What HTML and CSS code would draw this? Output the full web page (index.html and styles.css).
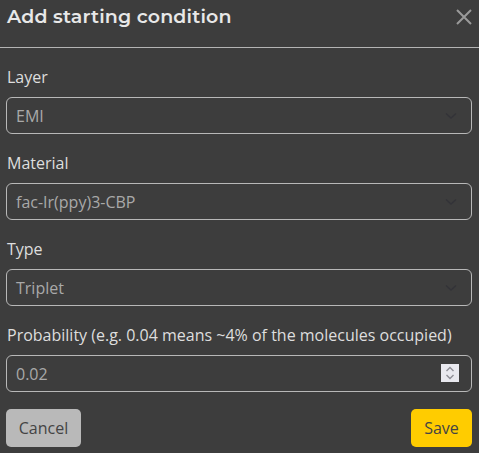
FILE: index.html
```html
<!DOCTYPE html>
<html>
<head>
<meta charset="utf-8">
<link rel="stylesheet" href="styles.css">
</head>
<body>
<div class="dialog">
  <div class="header">
    <h1 class="title">Add starting condition</h1>
    <span class="close" aria-label="Close">
      <svg width="16" height="16" viewBox="0 0 16 16"><path d="M1 1 L15 15 M15 1 L1 15" stroke="#9a9a9a" stroke-width="2" fill="none"/></svg>
    </span>
  </div>
  <div class="body">
    <div class="field">
      <div class="label">Layer</div>
      <div class="control">
        <span class="value">EMI</span>
        <svg class="chev" width="12" height="8" viewBox="0 0 12 8"><path d="M1 1.5 L6 6 L11 1.5" stroke="#333338" stroke-width="1.4" fill="none"/></svg>
      </div>
    </div>
    <div class="field">
      <div class="label">Material</div>
      <div class="control">
        <span class="value">fac-Ir(ppy)3-CBP</span>
        <svg class="chev" width="12" height="8" viewBox="0 0 12 8"><path d="M1 1.5 L6 6 L11 1.5" stroke="#333338" stroke-width="1.4" fill="none"/></svg>
      </div>
    </div>
    <div class="field">
      <div class="label">Type</div>
      <div class="control">
        <span class="value">Triplet</span>
        <svg class="chev" width="12" height="8" viewBox="0 0 12 8"><path d="M1 1.5 L6 6 L11 1.5" stroke="#333338" stroke-width="1.4" fill="none"/></svg>
      </div>
    </div>
    <div class="field">
      <div class="label">Probability (e.g. 0.04 means ~4% of the molecules occupied)</div>
      <div class="control num">
        <span class="value">0.02</span>
        <span class="spin">
          <svg width="18" height="18" viewBox="0 0 18 18"><path d="M5.5 7 L9 3.5 L12.5 7 M5.5 11 L9 14.5 L12.5 11" stroke="#8e8e96" stroke-width="1.4" fill="none"/></svg>
        </span>
      </div>
    </div>
    <div class="actions">
      <button class="btn cancel">Cancel</button>
      <button class="btn save">Save</button>
    </div>
  </div>
</div>
</body>
</html>
```
FILE: styles.css
```css
html, body {
  margin: 0;
  padding: 0;
  background: #3d3d3d;
}
body {
  font-family: "Open Sans", "Liberation Sans", sans-serif;
  color: #dcdcdc;
  width: 479px;
  height: 453px;
  overflow: hidden;
}
.header {
  height: 48px;
  box-sizing: border-box;
  border-bottom: 1px solid #b4b4b4;
  display: flex;
  align-items: flex-start;
  justify-content: space-between;
  padding: 0 7px 0 7px;
}
.title {
  margin: 4px 0 0 0;
  font-family: "Montserrat", "Inter", "Open Sans", sans-serif;
  font-weight: 600;
  font-size: 19px;
  line-height: 26px;
  color: #e8e8e8;
  letter-spacing: 0.15px;
}
.close {
  display: flex;
  margin-top: 9px;
}
.body {
  padding: 19px 7px 0 6px;
}
.field {
  margin-bottom: 19px;
}
.label {
  font-size: 16px;
  line-height: 20px;
  margin-left: 1px;
  margin-bottom: 10px;
  color: #dedede;
}
.control {
  height: 37px;
  box-sizing: border-box;
  border: 1px solid #b8b8b8;
  border-radius: 6px;
  display: flex;
  align-items: center;
  justify-content: space-between;
  padding: 0 14px 0 9px;
}
.value {
  font-size: 16px;
  color: #a9a9a9;
}
.chev {
  margin-top: 1px;
}
.num {
  padding-right: 12px;
}
.spin {
  display: flex;
  align-items: center;
  justify-content: center;
  width: 18px;
  height: 18px;
  background: #e9e9ef;
  margin-top: -1px;
}
.actions {
  display: flex;
  justify-content: space-between;
  margin-top: -2px;
}
.btn {
  font-family: "Open Sans", "Liberation Sans", sans-serif;
  font-size: 16px;
  height: 38px;
  border: none;
  border-radius: 5px;
  color: #444;
  padding: 0 10px;
  cursor: pointer;
}
.cancel {
  width: 75px;
  background: #b9b9b9;
}
.save {
  width: 61px;
  background: #ffcc00;
}
```
